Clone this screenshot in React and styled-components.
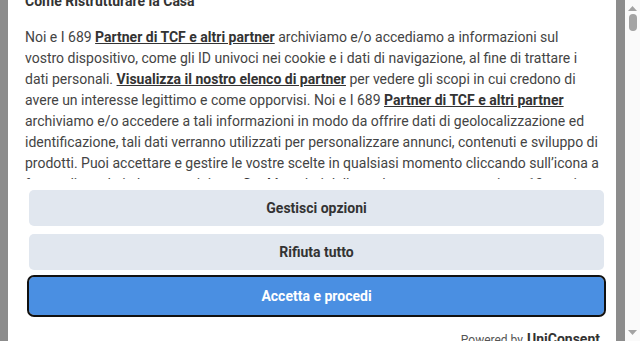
import React from "react";
import styled, { createGlobalStyle } from "styled-components";

const Global = createGlobalStyle`
  html, body { margin: 0; padding: 0; height: 100%; overflow: hidden; }
  body { font-family: Roboto, "Liberation Sans", Arial, sans-serif; }
  #root { height: 100%; }
`;

const Page = styled.div`
  display: flex;
  height: 341px;
  width: 640px;
  overflow: hidden;
`;

const Overlay = styled.div`
  flex: 1;
  background: #8c8c8c;
  padding: 0 9px 0 8px;
  overflow: hidden;
`;

const Dialog = styled.div`
  margin-top: -2px;
  background: #fff;
  border-radius: 8px;
  padding: 0 12px 0 17px;
  height: 420px;
`;

const Title = styled.h2`
  margin: -9px 0 16px;
  font-size: 14px;
  line-height: 20px;
  font-weight: 700;
  color: #333;
`;

const TextBox = styled.div`
  height: 152px;
  overflow: hidden;
  font-size: 14px;
  line-height: 21px;
  color: #444;
  padding-right: 4px;
`;

const Link = styled.a`
  font-weight: 700;
  color: #333;
  text-decoration: underline;
`;

const Actions = styled.div`
  display: flex;
  flex-direction: column;
  gap: 8px;
  margin: 11px 0 0 4px;
`;

const Button = styled.button`
  height: ${(p) => (p.$primary ? "38px" : "36px")};
  border: none;
  border-radius: 5px;
  background: ${(p) => (p.$primary ? "#4a8fe2" : "#e1e7ef")};
  color: ${(p) => (p.$primary ? "#fff" : "#333")};
  font-family: Roboto, "Liberation Sans", Arial, sans-serif;
  font-size: 14px;
  font-weight: 700;
  outline: ${(p) => (p.$focused ? "2px solid #111" : "none")};
  margin-top: ${(p) => (p.$focused ? "-1px" : "0")};
  cursor: pointer;
`;

const Powered = styled.div`
  display: flex;
  justify-content: flex-end;
  align-items: baseline;
  gap: 4px;
  margin-top: 16px;
  padding-right: 4px;
  font-size: 12px;
  color: #555;
`;

const Brand = styled.span`
  font-size: 14px;
  font-weight: 700;
  color: #333;
`;

const Scrollbar = styled.div`
  width: 15px;
  background: #fafafa;
  display: flex;
  flex-direction: column;
  align-items: center;
  justify-content: space-between;
  padding: 6px 0;
  box-sizing: border-box;
`;

const Thumb = styled.div`
  width: 8px;
  height: 17px;
  border-radius: 4px;
  background: #a3a3a3;
  margin-top: 3px;
`;

const Track = styled.div`
  display: flex;
  flex-direction: column;
  align-items: center;
  flex: 1;
`;

const Arrow = ({ down }) => (
  <svg width="9" height="5" viewBox="0 0 9 5">
    <path d={down ? "M0 0 L9 0 L4.5 5 Z" : "M0 5 L9 5 L4.5 0 Z"} fill="#a3a3a3" />
  </svg>
);

export default function App() {
  return (
    <>
      <Global />
      <Page>
        <Overlay>
          <Dialog>
            <Title>Come Ristrutturare la Casa</Title>
            <TextBox>
              Noi e I 689 <Link>Partner di TCF e altri partner</Link> archiviamo e/o accediamo a
              informazioni sul vostro dispositivo, come gli ID univoci nei cookie e i dati di
              navigazione, al fine di trattare i dati personali.{" "}
              <Link>Visualizza il nostro elenco di partner</Link> per vedere gli scopi in cui
              credono di avere un interesse legittimo e come opporvisi. Noi e I 689{" "}
              <Link>Partner di TCF e altri partner</Link> archiviamo e/o accedere a tali
              informazioni in modo da offrire dati di geolocalizzazione ed identificazione, tali
              dati verranno utilizzati per personalizzare annunci, contenuti e sviluppo di
              prodotti. Puoi accettare e gestire le vostre scelte in qualsiasi momento cliccando
              sull’icona a forma di scudo in basso a sinistra. <Link>Cookie</Link> e dati delle
              scelte sono conservati per 13 mesi.
            </TextBox>
            <Actions>
              <Button>Gestisci opzioni</Button>
              <Button>Rifiuta tutto</Button>
              <Button $primary $focused>Accetta e procedi</Button>
            </Actions>
            <Powered>
              Powered by <Brand>UniConsent</Brand>
            </Powered>
          </Dialog>
        </Overlay>
        <Scrollbar>
          <Track>
            <Arrow />
            <Thumb />
          </Track>
          <Arrow down />
        </Scrollbar>
      </Page>
    </>
  );
}
